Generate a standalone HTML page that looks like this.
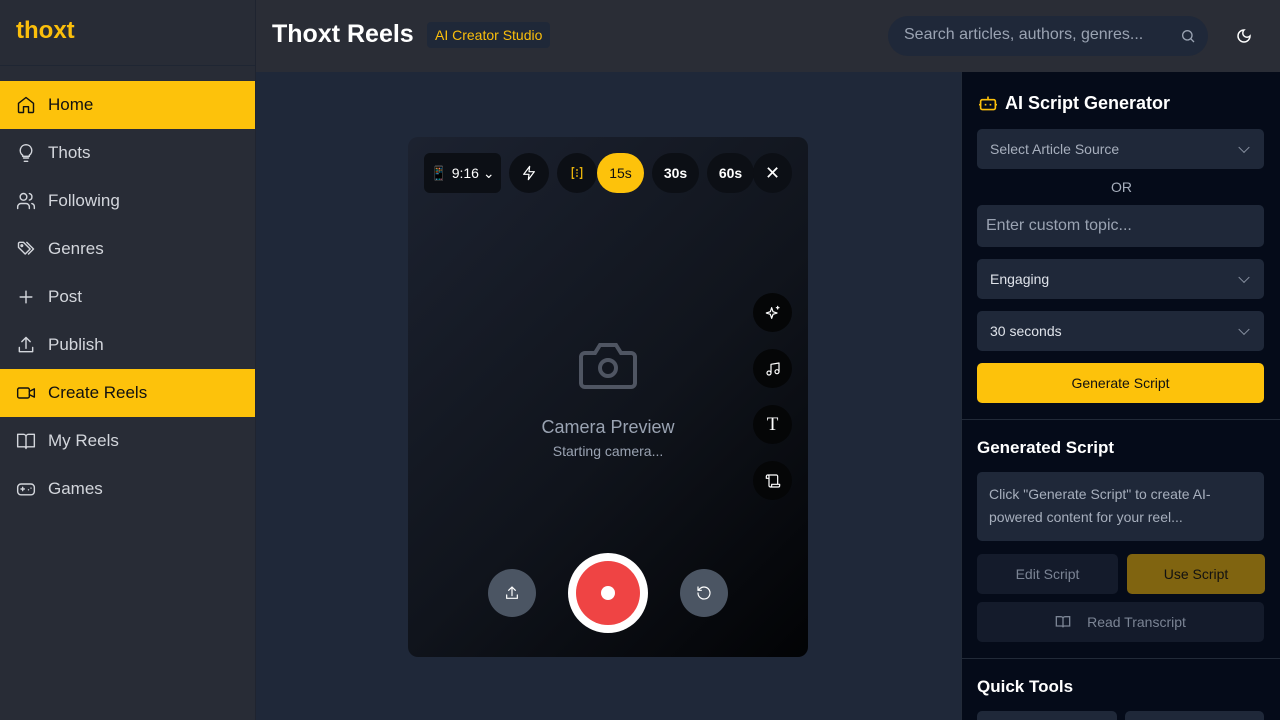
<!DOCTYPE html>
<html><head><meta charset="utf-8"><style>
*{box-sizing:border-box;margin:0;padding:0}
html,body{width:1280px;height:720px;overflow:hidden}
body{background:#1f2839;font-family:"Liberation Sans",sans-serif;position:relative}
.sb{position:absolute;left:0;top:0;width:256px;height:720px;background:#282c36;border-right:1px solid #1f2430}
.logo{height:66px;border-bottom:1px solid #1f2633;padding:17px 16px;color:#fbbf0b;font-weight:bold;font-size:24px}
.nav{margin-top:15px}
.it{height:48px;display:flex;align-items:center;padding-left:16px;color:#d3d6dc;font-size:17px}
.it svg{width:20px;height:20px;margin-right:12px;fill:none;stroke:currentColor;stroke-width:1.7;stroke-linecap:round;stroke-linejoin:round}
.it.a{background:#fdc20b;color:#111;width:255px}
.hd{position:absolute;left:256px;top:0;right:0;height:72px;background:#2a2d36}
.ttl{position:absolute;left:16px;top:20px;color:#fff;font-weight:bold;font-size:25px}
.badge{position:absolute;left:171px;top:22px;background:#1f2838;color:#fbbf0b;font-size:14px;padding:5px 8px;border-radius:4px}
.srch{position:absolute;left:632px;top:16px;width:320px;height:40px;border-radius:20px;background:#1f2839;color:#9aa3b2;font-size:16px;padding:10px 16px}
.rp{position:absolute;left:961px;top:72px;width:319px;height:648px;background:#050b19;border-left:1px solid #222a38}
.box{position:absolute;left:15px;width:287px;background:#1f2839;border-radius:5px;font-size:14px;color:#dfe3ea;padding-left:13px;display:flex;align-items:center}
.chev{position:absolute;right:16px;top:50%;width:8px;height:8px;border-right:1.5px solid #8a93a3;border-bottom:1.5px solid #8a93a3;transform:translateY(-70%) rotate(45deg)}
.h3{position:absolute;left:15px;color:#fff;font-size:17px;font-weight:bold}
.cam{position:absolute;left:408px;top:137px;width:400px;height:520px;border-radius:10px;background:linear-gradient(135deg,#1c2230 0%,#10141c 55%,#020305 100%)}
.pill{position:absolute;top:16px;height:40px;border-radius:20px;background:#0c0f15;color:#fff;font-size:14px;font-weight:bold;display:flex;align-items:center;justify-content:center}
.rb{position:absolute;left:345px;width:39px;height:39px;border-radius:50%;background:#050607;display:flex;align-items:center;justify-content:center}
svg.i{fill:none;stroke:#fff;stroke-width:1.8;stroke-linecap:round;stroke-linejoin:round}
</style></head><body>
<div class="sb">
<div class="logo">thoxt</div>
<div class="nav">
<div class="it a"><svg viewBox="0 0 24 24"><path d="M3 10l9-7 9 7v10a1 1 0 0 1-1 1h-5v-7h-6v7H4a1 1 0 0 1-1-1z"/></svg>Home</div>
<div class="it"><svg viewBox="0 0 24 24"><path d="M9 18h6M10 22h4M12 2a7 7 0 0 0-4 12.7V16h8v-1.3A7 7 0 0 0 12 2z"/></svg>Thots</div>
<div class="it"><svg viewBox="0 0 24 24"><circle cx="9" cy="7" r="4"/><path d="M2 21v-2a4 4 0 0 1 4-4h6a4 4 0 0 1 4 4v2M16 3.1a4 4 0 0 1 0 7.8M22 21v-2a4 4 0 0 0-3-3.9"/></svg>Following</div>
<div class="it"><svg viewBox="0 0 24 24"><path d="M3 5v5l8 8 6-6-8-8H4zM13 4l8 8-6 6"/><circle cx="7" cy="8" r="1"/></svg>Genres</div>
<div class="it"><svg viewBox="0 0 24 24"><path d="M12 5v14M5 12h14"/></svg>Post</div>
<div class="it"><svg viewBox="0 0 24 24"><path d="M4 15v5h16v-5M12 3v13M7 8l5-5 5 5"/></svg>Publish</div>
<div class="it a"><svg viewBox="0 0 24 24"><rect x="2" y="6" width="14" height="12" rx="2"/><path d="M16 10l6-3v10l-6-3"/></svg>Create Reels</div>
<div class="it"><svg viewBox="0 0 24 24"><path d="M2 4h7a3 3 0 0 1 3 3v14a2 2 0 0 0-2-2H2zM22 4h-7a3 3 0 0 0-3 3v14a2 2 0 0 1 2-2h8z"/></svg>My Reels</div>
<div class="it"><svg viewBox="0 0 24 24"><rect x="2" y="6" width="20" height="13" rx="4"/><path d="M6 12h4M8 10v4M15 13h.01M18 11h.01"/></svg>Games</div>
</div></div>
<div class="hd">
<div class="ttl">Thoxt Reels</div>
<div class="badge">AI Creator Studio</div>
<div class="srch">Search articles, authors, genres...<svg style="position:absolute;right:12px;top:12px" width="16" height="16" viewBox="0 0 24 24" fill="none" stroke="#9aa3b2" stroke-width="2"><circle cx="11" cy="11" r="7"/><path d="M21 21l-5-5"/></svg></div>
<svg style="position:absolute;left:980px;top:28px" width="16" height="16" viewBox="0 0 24 24" fill="none" stroke="#fff" stroke-width="2.2"><path d="M12 3a6 6 0 0 0 9 9 9 9 0 1 1-9-9z"/></svg>
</div>
<div class="cam">
<div class="pill" style="left:16px;width:77px;border-radius:6px;font-weight:normal;top:16px">📱 9:16 ⌄</div>
<div class="pill" style="left:101px;width:40px"><svg class="i" width="16" height="16" viewBox="0 0 24 24"><path d="M13 2L4 14h8l-1 8 9-12h-8z"/></svg></div>
<div class="pill" style="left:149px;width:40px"><svg width="16" height="16" viewBox="0 0 24 24" fill="none" stroke="#e8b30b" stroke-width="2"><path d="M8 4H5v16h3M16 4h3v16h-3M12 6v3M12 11v2M12 15v3"/></svg></div>
<div class="pill" style="left:189px;width:47px;background:#fdc20b;color:#111;font-weight:normal">15s</div>
<div class="pill" style="left:244px;width:47px">30s</div>
<div class="pill" style="left:299px;width:47px">60s</div>
<div class="pill" style="left:345px;width:39px;font-weight:normal;font-size:18px">✕</div>
<div class="rb" style="top:156px"><svg class="i" width="16" height="16" viewBox="0 0 24 24"><path d="M10 4l2 6 6 2-6 2-2 6-2-6-6-2 6-2zM19 2v4M17 4h4"/></svg></div>
<div class="rb" style="top:212px"><svg class="i" width="16" height="16" viewBox="0 0 24 24"><path d="M9 18V5l12-2v13"/><circle cx="6" cy="18" r="3"/><circle cx="18" cy="16" r="3"/></svg></div>
<div class="rb" style="top:268px;color:#fff;font-family:'Liberation Serif',serif;font-size:19px">T</div>
<div class="rb" style="top:324px"><svg class="i" width="16" height="16" viewBox="0 0 24 24"><path d="M8 21h12a2 2 0 0 0 2-2v-2H10v2a2 2 0 1 1-4 0V5a2 2 0 1 0-4 0v3h4M19 17V5a2 2 0 0 0-2-2H4"/></svg></div>
<svg style="position:absolute;left:170px;top:202px" width="60" height="52" viewBox="0 0 60 52" fill="none" stroke="#4f5562" stroke-width="4"><path d="M3 18a4 4 0 0 1 4-4h10l5-8h16l5 8h10a4 4 0 0 1 4 4v26a4 4 0 0 1-4 4H7a4 4 0 0 1-4-4z"/><circle cx="30" cy="29" r="8"/></svg>
<div style="position:absolute;left:0;width:400px;top:280px;text-align:center;color:#9aa3b2;font-size:18px">Camera Preview</div>
<div style="position:absolute;left:0;width:400px;top:306px;text-align:center;color:#9aa3b2;font-size:14px">Starting camera...</div>
<div style="position:absolute;left:80px;top:432px;width:48px;height:48px;border-radius:50%;background:#4b5563;display:flex;align-items:center;justify-content:center"><svg class="i" width="16" height="16" viewBox="0 0 24 24"><path d="M4 15v5h16v-5M12 3v13M7 8l5-5 5 5"/></svg></div>
<div style="position:absolute;left:160px;top:416px;width:80px;height:80px;border-radius:50%;background:#fff;display:flex;align-items:center;justify-content:center"><div style="width:64px;height:64px;border-radius:50%;background:#ef4444;display:flex;align-items:center;justify-content:center"><div style="width:14px;height:14px;border-radius:50%;background:#fff"></div></div></div>
<div style="position:absolute;left:272px;top:432px;width:48px;height:48px;border-radius:50%;background:#4b5563;display:flex;align-items:center;justify-content:center"><svg class="i" width="16" height="16" viewBox="0 0 24 24"><path d="M3 12a9 9 0 1 0 3-6.7L3 8M3 3v5h5"/></svg></div>
</div>
<div class="rp">
<svg style="position:absolute;left:16px;top:22px" width="20" height="18" viewBox="0 0 24 22" fill="none" stroke="#fbbf0b" stroke-width="2"><rect x="3" y="7" width="18" height="12" rx="2"/><path d="M12 7V3M1 13h2M21 13h2M9 12v2M15 12v2"/></svg>
<div class="h3" style="left:43px;top:21px;font-size:18px">AI Script Generator</div>
<div class="box" style="top:57px;height:40px;color:#a7afbd">Select Article Source<span class="chev"></span></div>
<div style="position:absolute;left:0;width:319px;top:107px;text-align:center;color:#a7afbd;font-size:14px">OR</div>
<div class="box" style="top:133px;height:42px;font-size:16px;color:#9aa3b2;padding-left:9px">Enter custom topic...</div>
<div class="box" style="top:187px;height:40px">Engaging<span class="chev"></span></div>
<div class="box" style="top:239px;height:40px">30 seconds<span class="chev"></span></div>
<div class="box" style="top:291px;height:40px;background:#fdc20b;color:#111;justify-content:center;padding:0">Generate Script</div>
<div style="position:absolute;left:0;right:0;top:347px;border-top:1px solid #222a38"></div>
<div class="h3" style="top:366px">Generated Script</div>
<div class="box" style="top:400px;height:69px;color:#a7afbd;align-items:flex-start;padding:11px 12px;line-height:23px">Click "Generate Script" to create AI-powered content for your reel...</div>
<div class="box" style="top:482px;width:141px;height:40px;background:#141b2b;color:#7b8494;justify-content:center;padding:0">Edit Script</div>
<div class="box" style="top:482px;left:165px;width:138px;height:40px;background:#806410;color:#111;justify-content:center;padding:0">Use Script</div>
<div class="box" style="top:530px;height:40px;background:#141b2b;color:#7b8494;justify-content:center;padding:0"><svg width="16" height="14" viewBox="0 0 24 20" fill="none" stroke="#7b8494" stroke-width="2" style="margin-right:16px"><path d="M2 2h7a3 3 0 0 1 3 3v13a2 2 0 0 0-2-2H2zM22 2h-7a3 3 0 0 0-3 3v13a2 2 0 0 1 2-2h8z"/></svg>Read Transcript</div>
<div style="position:absolute;left:0;right:0;top:586px;border-top:1px solid #222a38"></div>
<div class="h3" style="top:605px">Quick Tools</div>
<div class="box" style="top:639px;width:140px;height:20px;background:#1f2839"></div>
<div class="box" style="top:639px;left:163px;width:139px;height:20px;background:#1f2839"></div>
</div>
</body></html>
